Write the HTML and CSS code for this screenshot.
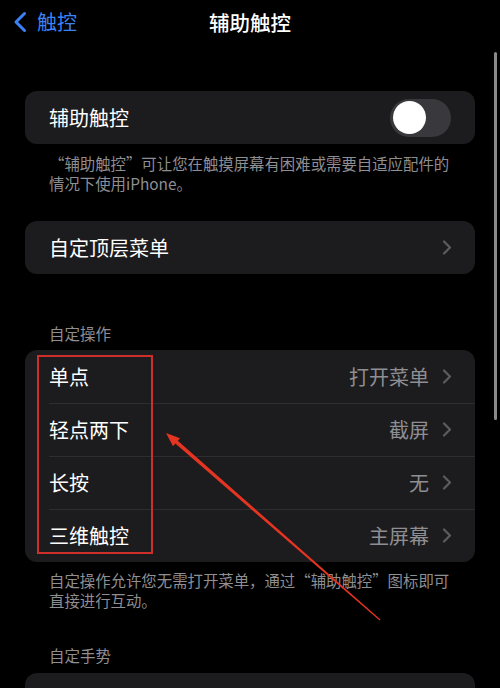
FILE: index.html
```html
<!DOCTYPE html>
<html lang="zh-CN">
<head>
<meta charset="utf-8">
<title>辅助触控</title>
<link rel="stylesheet" href="styles.css">
</head>
<body>
<div class="screen">
  <header class="nav">
    <div class="back">
      <svg class="back-icon" width="16" height="22" viewBox="0 0 16 22"><path d="M12.5 2.5 L4 11 L12.5 19.5" fill="none" stroke="#3a82f6" stroke-width="3" stroke-linecap="round" stroke-linejoin="round"/></svg>
      <span class="back-text">触控</span>
    </div>
    <div class="title">辅助触控</div>
    <div></div>
  </header>

  <main class="content">
    <section class="card card-first">
      <div class="row">
        <span class="label">辅助触控</span>
        <span class="switch"><span class="knob"></span></span>
      </div>
    </section>
    <p class="note note-first">“辅助触控”可让您在触摸屏幕有困难或需要自适应配件的情况下使用iPhone。</p>

    <section class="card card-second">
      <div class="row">
        <span class="label">自定顶层菜单</span>
        <span class="chev"><svg width="10" height="15" viewBox="0 0 10 15"><path d="M2 1.5 L8 7.5 L2 13.5" fill="none" stroke="#5c5c60" stroke-width="2.2" stroke-linecap="round" stroke-linejoin="round"/></svg></span>
      </div>
    </section>

    <h3 class="section-head head-first">自定操作</h3>
    <section class="card">
      <div class="row">
        <span class="label">单点</span>
        <span class="value">打开菜单</span>
        <span class="chev"><svg width="10" height="15" viewBox="0 0 10 15"><path d="M2 1.5 L8 7.5 L2 13.5" fill="none" stroke="#5c5c60" stroke-width="2.2" stroke-linecap="round" stroke-linejoin="round"/></svg></span>
      </div>
      <div class="row divided">
        <span class="label">轻点两下</span>
        <span class="value">截屏</span>
        <span class="chev"><svg width="10" height="15" viewBox="0 0 10 15"><path d="M2 1.5 L8 7.5 L2 13.5" fill="none" stroke="#5c5c60" stroke-width="2.2" stroke-linecap="round" stroke-linejoin="round"/></svg></span>
      </div>
      <div class="row divided">
        <span class="label">长按</span>
        <span class="value">无</span>
        <span class="chev"><svg width="10" height="15" viewBox="0 0 10 15"><path d="M2 1.5 L8 7.5 L2 13.5" fill="none" stroke="#5c5c60" stroke-width="2.2" stroke-linecap="round" stroke-linejoin="round"/></svg></span>
      </div>
      <div class="row divided">
        <span class="label">三维触控</span>
        <span class="value">主屏幕</span>
        <span class="chev"><svg width="10" height="15" viewBox="0 0 10 15"><path d="M2 1.5 L8 7.5 L2 13.5" fill="none" stroke="#5c5c60" stroke-width="2.2" stroke-linecap="round" stroke-linejoin="round"/></svg></span>
      </div>
    </section>
    <p class="note note-second">自定操作允许您无需打开菜单，通过“辅助触控”图标即可直接进行互动。</p>

    <h3 class="section-head head-second">自定手势</h3>
    <section class="card card-last"></section>
  </main>

  <div class="scrollbar"></div>
  <div class="highlight"></div>
  <svg class="arrow" width="500" height="688" viewBox="0 0 500 688">
    <polygon points="166,433 180,438.2 177.8,440.8 380.4,619.6 379.6,620.4 175.3,443.6 173,446.2" fill="#e53422"/>
  </svg>
</div>
</body>
</html>
```

FILE: styles.css
```css
html, body {
  margin: 0;
  padding: 0;
  background: #000;
}

body {
  font-family: "Noto Sans CJK SC", "Noto Sans", sans-serif;
  color: #fff;
}

.screen {
  position: relative;
  width: 500px;
  height: 688px;
  overflow: hidden;
  background: #000;
}

.nav {
  height: 44px;
  display: grid;
  grid-template-columns: 1fr auto 1fr;
  align-items: center;
}

.back {
  display: flex;
  align-items: center;
  padding-left: 12px;
  gap: 9px;
}

.back-icon {
  display: block;
}

.back-text {
  color: #3a82f6;
  font-size: 20px;
  line-height: 24px;
}

.title {
  font-size: 20.5px;
  font-weight: 500;
  line-height: 24px;
  color: #fff;
}

.content {
  padding: 0 25px;
}

.card {
  background: #1c1c1e;
  border-radius: 12px;
  overflow: hidden;
}

.card-first {
  margin-top: 47px;
}

.card-second {
  margin-top: 28.5px;
}

.card-last {
  height: 60px;
}

.row {
  height: 53px;
  display: flex;
  align-items: center;
  padding: 0 23px 0 24px;
  position: relative;
}

.row.divided::before {
  content: "";
  position: absolute;
  left: 24px;
  right: 0;
  top: 0;
  height: 1px;
  background: #2e2e31;
}

.label {
  font-size: 20px;
  line-height: 24px;
  color: #fff;
  flex: 1;
}

.value {
  font-size: 20px;
  line-height: 24px;
  color: #8e8e93;
  margin-right: 13px;
}

.chev {
  display: flex;
  align-items: center;
}

.chev svg {
  display: block;
}

.switch {
  width: 61px;
  height: 38px;
  border-radius: 19px;
  background: #39393d;
  position: relative;
  margin-right: 1px;
}

.knob {
  position: absolute;
  left: 2.5px;
  top: 2.5px;
  width: 33px;
  height: 33px;
  border-radius: 50%;
  background: #fff;
}

.note {
  margin: 0;
  padding: 0 24px;
  font-size: 15.4px;
  line-height: 20px;
  color: #8e8e93;
}

.note-first {
  padding-top: 8.5px;
}

.note-second {
  padding-top: 8px;
}

.section-head {
  margin: 0;
  padding: 0 24px 7.5px;
  font-size: 15.5px;
  font-weight: 400;
  line-height: 20px;
  color: #8e8e93;
}

.head-first {
  margin-top: 48.5px;
}

.head-second {
  margin-top: 35px;
}

.scrollbar {
  position: absolute;
  left: 494px;
  top: 52px;
  width: 3px;
  height: 368px;
  border-radius: 2px;
  background: #8a8a8e;
}

.highlight {
  position: absolute;
  left: 37px;
  top: 355px;
  width: 112px;
  height: 195px;
  border: 2px solid #cf2f2b;
}

.arrow {
  position: absolute;
  left: 0;
  top: 0;
}
```
